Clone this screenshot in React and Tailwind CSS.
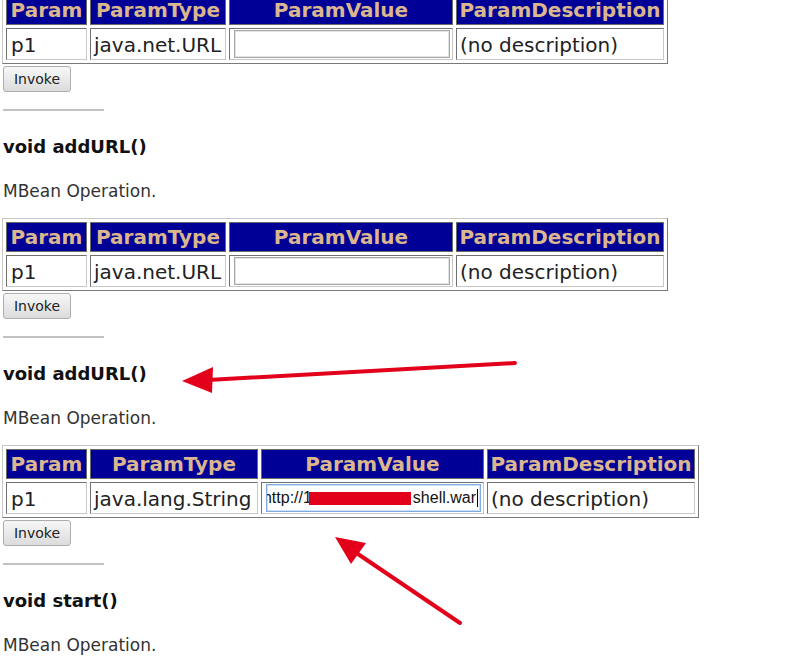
import React from 'react'

/* ─── Tables ─────────────────────────────────────────────────────── */
const narrow = ['w-[81px]', 'w-[136px]', 'w-[224px]', 'w-[208px]']
const wide = ['w-[81px]', 'w-[168px]', 'w-[223px]', 'w-[208px]']

const headers = ['Param', 'ParamType', 'ParamValue', 'ParamDescription']

function EmptyInput() {
  return (
    <div className="ml-[4px] mr-[2px] w-[216px] h-[28px] border border-[#a7a7a7] bg-white shadow-[inset_0_0_0_1px_#e4e4e4]" />
  )
}

// focused field, scrolled to the end of a long value
function FilledInput() {
  return (
    <div className="ml-[4px] mr-[2px] w-[215px] h-[28px] border border-[#7fa9e2] bg-white shadow-[inset_0_0_0_1px_#cfe0f6] flex items-center justify-end overflow-hidden pr-[2px] font-['Liberation_Sans',Arial,sans-serif] text-[16px] text-[#111] whitespace-nowrap">
      <span className="shrink-0">http://1</span>
      <span className="shrink-0 -ml-[3px] w-[102px] h-[13px] bg-[#e3001b]" />
      <span className="shrink-0 ml-[2px]">shell.war</span>
      <span className="shrink-0 ml-[1px] w-px h-[18px] bg-black" />
    </div>
  )
}

function ParamTable({ type, widths, filled }) {
  return (
    <table className="-ml-px table-fixed border-separate border-spacing-[3px] border border-[#c6c6c6] border-r-[#7a7a7a] border-b-[#7a7a7a]">
      <thead>
        <tr>
          {headers.map((h, i) => (
            <th
              key={h}
              className={`${widths[i]} h-[30px] px-[2px] p-0 bg-[#000096] text-[#dbb68e] text-[20px] font-bold text-center border border-[#6a6a6a] leading-none`}
            >
              {h}
            </th>
          ))}
        </tr>
      </thead>
      <tbody>
        <tr>
          <td className={`${widths[0]} h-[32px] pl-[4px] pt-[2px] border border-[#707070] border-r-[#c8c8c8] border-b-[#c8c8c8] text-[20px] text-[#222] leading-none`}>p1</td>
          <td className={`${widths[1]} h-[32px] pl-[3px] pt-[2px] border border-[#707070] border-r-[#c8c8c8] border-b-[#c8c8c8] text-[20px] text-[#222] leading-none whitespace-nowrap`}>{type}</td>
          <td className={`${widths[2]} h-[32px] p-0 border border-[#707070] border-r-[#c8c8c8] border-b-[#c8c8c8]`}>
            {filled ? <FilledInput /> : <EmptyInput />}
          </td>
          <td className={`${widths[3]} h-[32px] pl-[3px] pt-[2px] border border-[#707070] border-r-[#c8c8c8] border-b-[#c8c8c8] text-[20px] text-[#222] leading-none whitespace-nowrap`}>(no description)</td>
        </tr>
      </tbody>
    </table>
  )
}

function InvokeButton() {
  return (
    <button className="mt-[2px] w-[68px] h-[26px] rounded-[3px] border border-[#adadad] bg-gradient-to-b from-[#f7f7f7] to-[#dcdcdc] text-[14px] text-[#222] leading-none">
      Invoke
    </button>
  )
}

function OpTitle({ name }) {
  return (
    <>
      <hr className="mt-[17px] w-[101px] border-t-2 border-[#c2c2c2]" />
      <div className="mt-[26px] text-[18px] leading-[20px] font-bold text-[#111]">{name}</div>
      <div className="mt-[24px] text-[17px] leading-[20px] text-[#333]">MBean Operation.</div>
    </>
  )
}

function Operation({ name, type, widths, filled }) {
  return (
    <>
      <div className="mt-[17px]">
        <ParamTable type={type} widths={widths} filled={filled} />
      </div>
      <div>
        <InvokeButton />
      </div>
      <OpTitle name={name} />
    </>
  )
}

/* ─── Page ───────────────────────────────────────────────────────── */
export default function App() {
  return (
    <div className="relative w-[792px] h-[657px] overflow-hidden bg-white font-['DejaVu_Sans',Verdana,sans-serif]">
      <div className="-mt-[9px] pl-[3px] flex flex-col items-start">
        {/* tail of the previous operation */}
        <ParamTable type="java.net.URL" widths={narrow} />
        <div>
          <InvokeButton />
        </div>
        <OpTitle name="void addURL()" />

        <Operation name="void addURL()" type="java.net.URL" widths={narrow} />
        <Operation name="void start()" type="java.lang.String" widths={wide} filled />
      </div>

      {/* annotation arrows */}
      <svg className="absolute inset-0 pointer-events-none" width="792" height="657" viewBox="0 0 792 657">
        <line x1="515" y1="363" x2="208" y2="380" stroke="#e2001a" strokeWidth="4" strokeLinecap="round" />
        <polygon points="182,381 213,367 212,393" fill="#e2001a" />
        <line x1="460" y1="623" x2="355" y2="552" stroke="#e2001a" strokeWidth="4" strokeLinecap="round" />
        <polygon points="335,537 366,543 351,564" fill="#e2001a" />
      </svg>
    </div>
  )
}
